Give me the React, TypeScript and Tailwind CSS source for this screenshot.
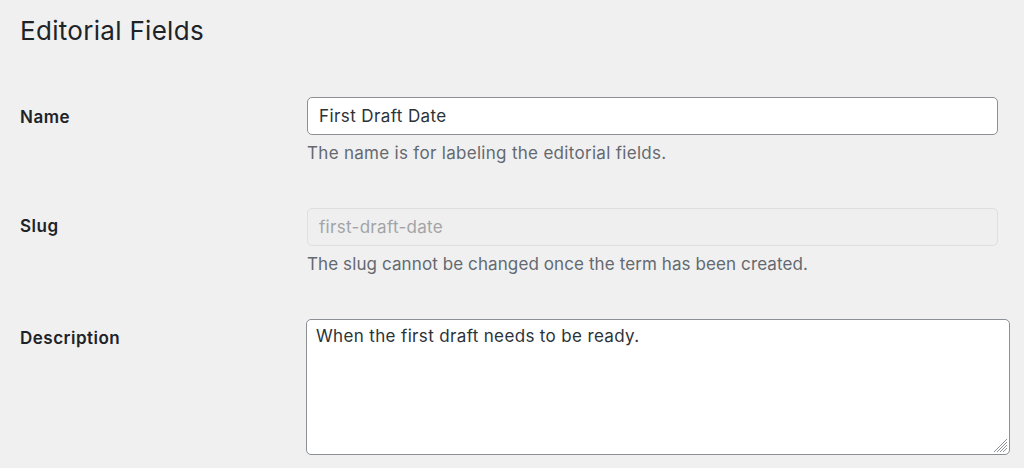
import React from 'react'

const FONT = "font-['Inter','Liberation_Sans',sans-serif]"

function Grip() {
  return (
    <svg
      className="pointer-events-none absolute bottom-[3px] right-[3px]"
      width="14"
      height="14"
      viewBox="0 0 14 14"
      fill="none"
      stroke="#8c8f94"
      strokeWidth="1"
    >
      <line x1="1" y1="14" x2="14" y2="1" />
      <line x1="4" y1="14" x2="14" y2="4" />
      <line x1="7" y1="14" x2="14" y2="7" />
      <line x1="10" y1="14" x2="14" y2="10" />
    </svg>
  )
}

export default function App() {
  return (
    <div className={`min-h-screen bg-[#f0f0f1] pl-[20px] pt-[15px] ${FONT}`}>
      <h1 className="text-[26px] font-normal leading-[32px] tracking-[0.3px] text-[#1d2327]">Editorial Fields</h1>

      <div className="mt-[50px] flex flex-col gap-[43px]">
        {/* Name */}
        <div className="flex">
          <label className="w-[287px] shrink-0 pt-[8px] text-[17px] font-semibold leading-6 tracking-[0.5px] text-[#1d2327]">
            Name
          </label>
          <div className="w-[691px]">
            <input
              readOnly
              value="First Draft Date"
              className="block h-[38px] w-full rounded-[5px] border border-[#8c8f94] bg-white px-[11px] text-[17px] tracking-[0.4px] text-[#2c3338] outline-none"
            />
            <p className="mt-[6px] text-[17px] leading-6 tracking-[0.3px] text-[#646970]">
              The name is for labeling the editorial fields.
            </p>
          </div>
        </div>

        {/* Slug */}
        <div className="flex">
          <label className="w-[287px] shrink-0 pt-[6px] text-[17px] font-semibold leading-6 tracking-[0.5px] text-[#1d2327]">
            Slug
          </label>
          <div className="w-[691px]">
            <input
              readOnly
              disabled
              value="first-draft-date"
              className="block h-[38px] w-full rounded-[5px] border border-[#dfdfe0] bg-[#efefef] px-[11px] text-[17px] tracking-[0.3px] text-[#a2a4a7] outline-none"
            />
            <p className="mt-[6px] text-[17px] leading-6 tracking-[0.1px] text-[#646970]">
              The slug cannot be changed once the term has been created.
            </p>
          </div>
        </div>

        {/* Description */}
        <div className="flex">
          <label className="w-[287px] shrink-0 pt-[7px] text-[17px] font-semibold leading-6 tracking-[0.5px] text-[#1d2327]">
            Description
          </label>
          <div className="relative w-[704px] -ml-px">
            <textarea
              readOnly
              value="When the first draft needs to be ready."
              className="block h-[136px] w-full resize-none rounded-[5px] border border-[#8c8f94] bg-white px-[9px] pt-[4px] text-[17px] leading-6 tracking-[0.35px] text-[#2c3338] outline-none"
            />
            <Grip />
          </div>
        </div>
      </div>
    </div>
  )
}
